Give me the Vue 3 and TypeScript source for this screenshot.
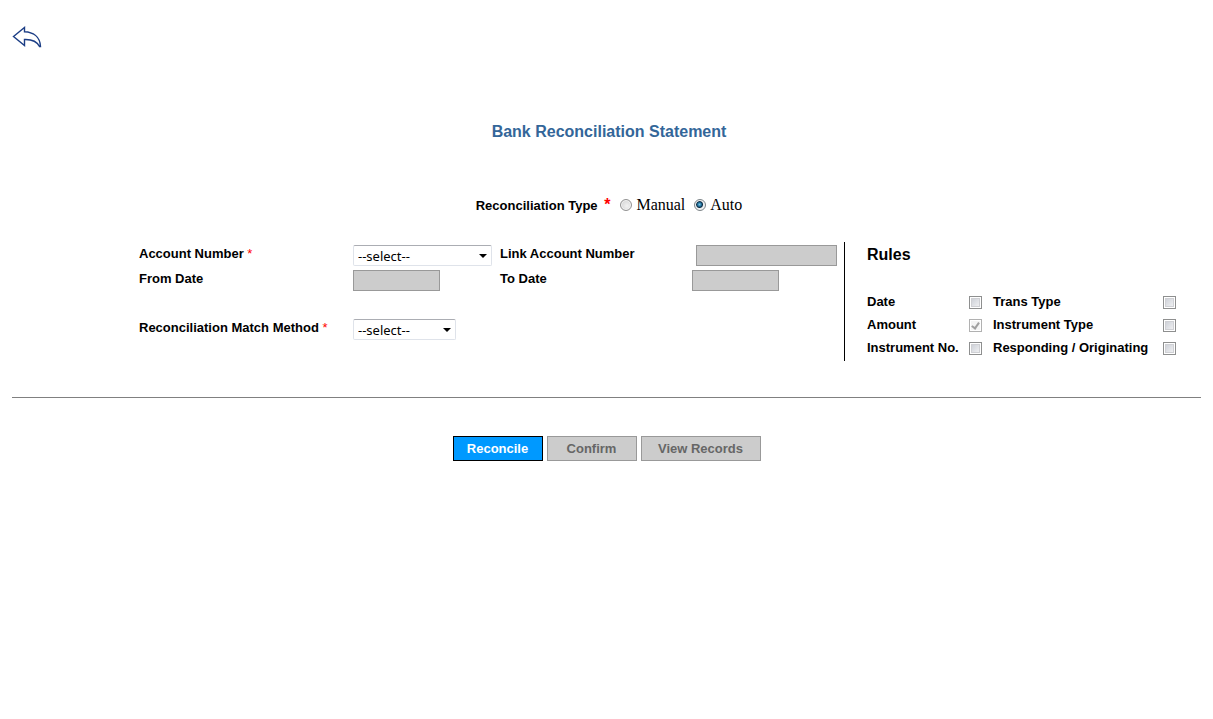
<script setup lang="ts">
import { reactive, ref } from 'vue'

interface Rule {
  id: string
  label: string
  checked: boolean
  disabled: boolean
}

const reconType = ref<'manual' | 'auto'>('auto')
const account = ref('')
const matchMethod = ref('')

const rules = reactive<Rule[]>([
  { id: 'date', label: 'Date', checked: false, disabled: false },
  { id: 'trans-type', label: 'Trans Type', checked: false, disabled: false },
  { id: 'amount', label: 'Amount', checked: true, disabled: true },
  { id: 'instrument-type', label: 'Instrument Type', checked: false, disabled: false },
  { id: 'instrument-no', label: 'Instrument No.', checked: false, disabled: false },
  { id: 'responding', label: 'Responding / Originating', checked: false, disabled: false },
])
</script>

<template>
  <main class="page">
    <button class="back" type="button" aria-label="Back">
      <svg width="30" height="24" viewBox="0 0 30 24" aria-hidden="true">
        <path d="M1.5 10.5 L12.5 1.5 V5.8 C21 6.2 28 10.5 28.5 20.5 H27.5 C25 15.5 20 13.2 12.5 13.5 V19.5 Z" />
      </svg>
    </button>

    <h1 class="title">Bank Reconciliation Statement</h1>

    <form @submit.prevent>
      <div class="type" role="radiogroup" aria-labelledby="type-label">
        <span id="type-label" class="type-label">Reconciliation Type <b class="req">*</b></span>
        <label class="option"><input v-model="reconType" type="radio" name="type" value="manual" />Manual</label>
        <label class="option"><input v-model="reconType" type="radio" name="type" value="auto" />Auto</label>
      </div>

      <div class="columns">
        <div class="fields">
          <label for="account">Account Number <span class="req">*</span></label>
          <div class="select account">
            <select id="account" v-model="account"><option value="">--select--</option></select>
          </div>
          <label for="link-account">Link Account Number</label>
          <input id="link-account" class="text link" type="text" disabled />

          <label for="from-date">From Date</label>
          <input id="from-date" class="text date" type="text" disabled />
          <label for="to-date">To Date</label>
          <input id="to-date" class="text date" type="text" disabled />

          <label class="method-row" for="method">Reconciliation Match Method <span class="req">*</span></label>
          <div class="select method method-row">
            <select id="method" v-model="matchMethod"><option value="">--select--</option></select>
          </div>
        </div>

        <section class="rules">
          <h2>Rules</h2>
          <div class="rule-grid">
            <template v-for="rule in rules" :key="rule.id">
              <label :for="rule.id">{{ rule.label }}</label>
              <input :id="rule.id" v-model="rule.checked" type="checkbox" :disabled="rule.disabled" />
            </template>
          </div>
        </section>
      </div>

      <hr />

      <div class="actions">
        <button class="btn primary" type="submit">Reconcile</button>
        <button class="btn" type="button" disabled>Confirm</button>
        <button class="btn wide" type="button" disabled>View Records</button>
      </div>
    </form>
  </main>
</template>

<style>
body {
  background: #fff;
}
</style>

<style scoped>
.page {
  padding: 26px 12px;
  color: #000;
  font: bold 13px/16px "Liberation Sans", Arial, sans-serif;
}
.back {
  display: block;
  padding: 0;
  border: 0;
  background: none;
  cursor: pointer;
}
.back svg {
  display: block;
  fill: #fff;
  stroke: #1b3d85;
  stroke-width: 1.4;
}
.title {
  margin: 72px 0 0 5px;
  color: #369;
  font-size: 16px;
  line-height: 20px;
  text-align: center;
}
.req {
  color: #f00;
}
span.req {
  font-weight: normal;
}
.type {
  display: flex;
  align-items: center;
  justify-content: center;
  margin: 52px 0 0 5px;
  line-height: 20px;
}
.type-label {
  margin-right: 10px;
  padding-top: 2px;
}
.type-label .req {
  margin-left: 3px;
  font-size: 16px;
  line-height: 16px;
}
.option {
  display: flex;
  align-items: center;
  font: 16px/20px "Liberation Serif", "Times New Roman", serif;
}
.option + .option {
  margin-left: 9px;
}
input[type="radio"] {
  appearance: none;
  box-sizing: border-box;
  width: 12px;
  height: 12px;
  margin: 0 4px 0 0;
  border: 1px solid #929292;
  border-radius: 50%;
  background: radial-gradient(circle at 60% 60%, #f2f2f2, #cdcdcd);
  box-shadow: inset 0 0 0 1px #f4f4f4;
}
input[type="radio"]:checked {
  border-color: #7d8488;
  background: radial-gradient(circle at 45% 45%, #79c6e8 0, #1e6a94 2px, #0d2b43 3px, #e9edf0 4px);
}
.columns {
  display: flex;
  margin: 26px 0 0 127px;
}
.fields {
  display: grid;
  grid-template-columns: 214px 147px 192px auto;
  align-content: start;
  align-items: start;
  row-gap: 4px;
  padding: 3px 7px 0 0;
}
.fields label {
  line-height: 18px;
}
.method-row {
  margin-top: 24px;
}
.select {
  position: relative;
}
.select::after {
  content: "";
  position: absolute;
  top: 9px;
  right: 5px;
  width: 8px;
  height: 4px;
  background: #000;
  clip-path: polygon(0 0, 100% 0, 50% 100%);
  pointer-events: none;
}
.account {
  width: 139px;
}
.method {
  width: 103px;
}
select {
  appearance: none;
  display: block;
  box-sizing: border-box;
  width: 100%;
  height: 21px;
  padding: 0 16px 0 4px;
  border: 1px solid #dfe3ea;
  border-top-color: #abadb3;
  border-radius: 2px;
  background: #fff;
  color: #000;
  font: 13px/18px "Noto Sans", Tahoma, sans-serif;
}
.text {
  box-sizing: border-box;
  height: 21px;
  margin: 0;
  padding: 1px 4px;
  border: 1px solid #999;
  border-radius: 0;
  background: #ccc;
}
.date {
  width: 87px;
}
.link {
  width: 141px;
  margin-left: 4px;
}
.rules {
  box-sizing: border-box;
  min-height: 119px;
  padding: 3px 0 0 22px;
  border-left: 1px solid #000;
}
h2 {
  margin: 0;
  font-size: 16px;
  line-height: 20px;
}
.rule-grid {
  display: grid;
  grid-template-columns: 102px 24px 170px 13px;
  grid-auto-rows: 23px;
  margin-top: 26px;
}
.rule-grid label {
  line-height: 22px;
  white-space: nowrap;
}
input[type="checkbox"] {
  appearance: none;
  box-sizing: border-box;
  width: 13px;
  height: 13px;
  margin: 5px 0 0;
  border: 1px solid #8e8f8f;
  background: linear-gradient(135deg, #c6cad2, #f7f7f8);
  box-shadow: inset 0 0 0 1px #fff, inset 0 0 0 2px #cfd0d4;
}
input[type="checkbox"]:disabled {
  border-color: #b1b1b1;
  background: #f4f4f4;
  box-shadow: inset 0 0 0 1px #fff;
}
input[type="checkbox"]:checked::before {
  content: "";
  display: block;
  width: 3px;
  height: 6px;
  margin: 1px 0 0 3px;
  border: solid #a0a0a0;
  border-width: 0 2px 2px 0;
  transform: rotate(35deg);
}
hr {
  margin: 36px 0 0;
  border: 0;
  border-top: 1px solid #808080;
}
.actions {
  display: flex;
  justify-content: center;
  gap: 4px;
  margin-top: 38px;
}
.btn {
  box-sizing: border-box;
  width: 90px;
  height: 25px;
  padding: 0;
  border: 1px solid #999;
  border-radius: 0;
  background: #ccc;
  color: #666;
  font: inherit;
}
.wide {
  width: 120px;
}
.primary {
  border-color: #000;
  background: #09f;
  color: #fff;
}
</style>
